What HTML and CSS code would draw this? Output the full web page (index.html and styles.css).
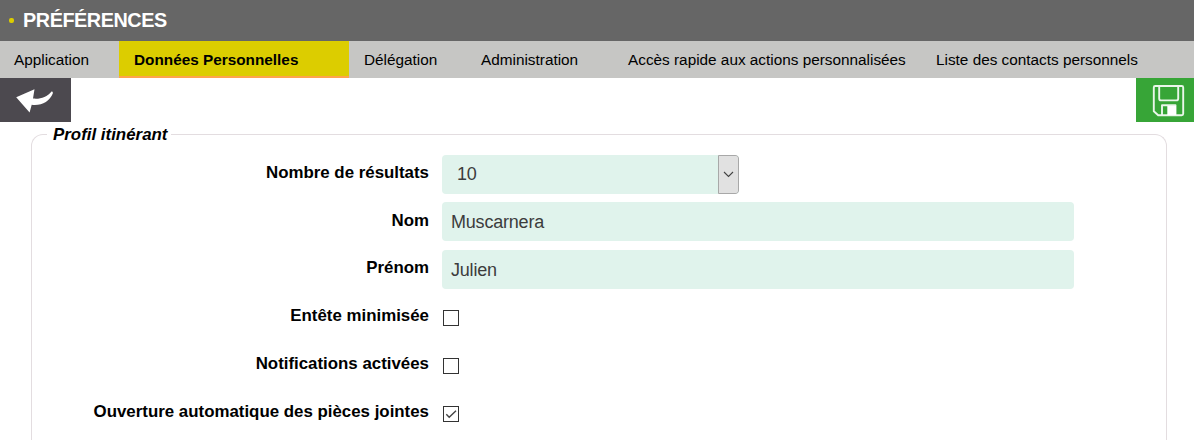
FILE: index.html
```html
<!DOCTYPE html>
<html lang="fr">
<head>
<meta charset="utf-8">
<title>Préférences</title>
<link rel="stylesheet" href="styles.css">
</head>
<body>
<header class="header"><span class="bullet"></span><h1 class="title">PRÉFÉRENCES</h1></header>
<nav class="tabs">
  <a class="tab tab-app">Application</a>
  <a class="tab tab-data active">Données Personnelles</a>
  <a class="tab tab-deleg">Délégation</a>
  <a class="tab tab-admin">Administration</a>
  <a class="tab tab-quick">Accès rapide aux actions personnalisées</a>
  <a class="tab tab-contacts">Liste des contacts personnels</a>
</nav>
<div class="toolbar">
  <button class="back" aria-label="Retour">
    <svg width="71" height="44" viewBox="0 0 71 44"><path d="M16.2 19.3L34.5 11.3L33 20.6C40 21.3 47 19.5 51.5 13.5Q53.2 13 52.8 15.5C49.5 23.5 41.5 28 31.7 26.8L29.6 34.6Z" fill="#fff"/></svg>
  </button>
  <button class="save" aria-label="Enregistrer">
    <svg width="58" height="44" viewBox="0 0 58 44" fill="none" stroke="#eaf6ea" stroke-width="1.9" stroke-linejoin="round"><path d="M19.2 8H45.7Q47.2 8 47.2 9.5V35.8Q47.2 37.3 45.7 37.3H22.2L17.8 33.3V9.5Q17.8 8 19.2 8Z"/><path d="M23.2 8V20.5Q23.2 22.4 25 22.4H40.3Q42.2 22.4 42.2 20.5V8"/><path d="M26 37V27.3H39.5V37"/><path d="M31.3 28H40V37H31.3Z" fill="#fff" stroke="none"/></svg>
  </button>
</div>
<fieldset class="profile">
  <legend class="legend">Profil itinérant</legend>
  <div class="row">
    <label class="label">Nombre de résultats</label>
    <div class="select"><span class="select-value">10</span><span class="select-arrow"><svg width="11" height="7" viewBox="0 0 11 7"><path d="M1 1L5.5 5.5L10 1" fill="none" stroke="#444" stroke-width="1.1"/></svg></span></div>
  </div>
  <div class="row raised"><label class="label">Nom</label><div class="input">Muscarnera</div></div>
  <div class="row"><label class="label">Prénom</label><div class="input">Julien</div></div>
  <div class="row"><label class="label">Entête minimisée</label><span class="check"></span></div>
  <div class="row"><label class="label">Notifications activées</label><span class="check"></span></div>
  <div class="row last"><label class="label">Ouverture automatique des pièces jointes</label><span class="check"><svg width="14" height="14" viewBox="0 0 14 14"><path d="M2.3 7.3L5.2 10.3L12 3.7" fill="none" stroke="#444" stroke-width="1.4"/></svg></span></div>
</fieldset>
</body>
</html>
```
FILE: styles.css
```css
* { box-sizing: border-box; }
body { margin: 0; height: 440px; overflow: hidden; background: #fff; color: #000; font-family: "Liberation Sans", Arial, sans-serif; }
.header { display: flex; align-items: center; height: 41px; padding-left: 9px; background: #666; }
.bullet { width: 5px; height: 5px; margin-right: 9px; border-radius: 2px; background: #dccd00; }
.title { margin: 0; padding-bottom: 2px; color: #fff; font-size: 19.8px; letter-spacing: -0.42px; line-height: 22px; }
.tabs { display: flex; height: 37px; background: #c6c6c4; font-size: 15.33px; }
.tab { flex: none; padding: 0 0 0 14px; line-height: 37px; white-space: nowrap; }
.tab-app { width: 119px; }
.tab-data { width: 230px; padding-left: 15px; }
.tab-deleg { width: 117px; padding-left: 15px; }
.tab-admin { width: 147px; padding-left: 15px; }
.tab-quick { width: 308px; padding-left: 15px; }
.tab-contacts { width: 273px; padding-left: 15px; }
.active { background: #dccd00; border-bottom: 2px solid #ffa34d; font-weight: bold; }
.toolbar { display: flex; justify-content: space-between; height: 44px; }
.back, .save { height: 44px; padding: 0; border: 0; }
.back { width: 71px; background: #4c494f; }
.save { width: 58px; background: #37a537; }
.back svg, .save svg { display: block; }
.profile { height: 315px; margin: 3px 27px 0 31px; padding: 0 0 0 11px; border: 1px solid #e3dde0; border-bottom: 0; border-radius: 12px 12px 0 0; }
.legend { height: 19px; margin-left: 4px; padding: 0 3px 0 6px; font-size: 16.9px; line-height: 19px; font-weight: bold; font-style: italic; }
.row { display: flex; align-items: flex-start; height: 48px; }
.legend + .row { height: 47px; margin-top: 11px; }
.last { height: 40px; }
.label { width: 386px; margin-right: 13px; padding-top: 8px; text-align: right; font-size: 16.87px; line-height: 19px; font-weight: bold; white-space: nowrap; }
.raised .label { padding-top: 9px; }
.input, .select { height: 39px; border-radius: 4px; background: #e0f3ec; color: #3c3c3c; font-size: 18px; letter-spacing: -0.2px; line-height: 39px; }
.input { width: 632px; padding-left: 9px; line-height: 41px; }
.select { display: flex; width: 297px; overflow: hidden; }
.select-value { flex: 1; padding-left: 15px; }
.select-arrow { display: flex; align-items: center; justify-content: center; width: 21px; border: 1px solid #a8a8a8; border-radius: 0 3px 3px 0; background: #e1e1e1; }
.check { width: 16px; height: 16px; margin: 12px 0 0 1px; border: 1px solid #333; background: #fff; }
.check svg { display: block; }
```
